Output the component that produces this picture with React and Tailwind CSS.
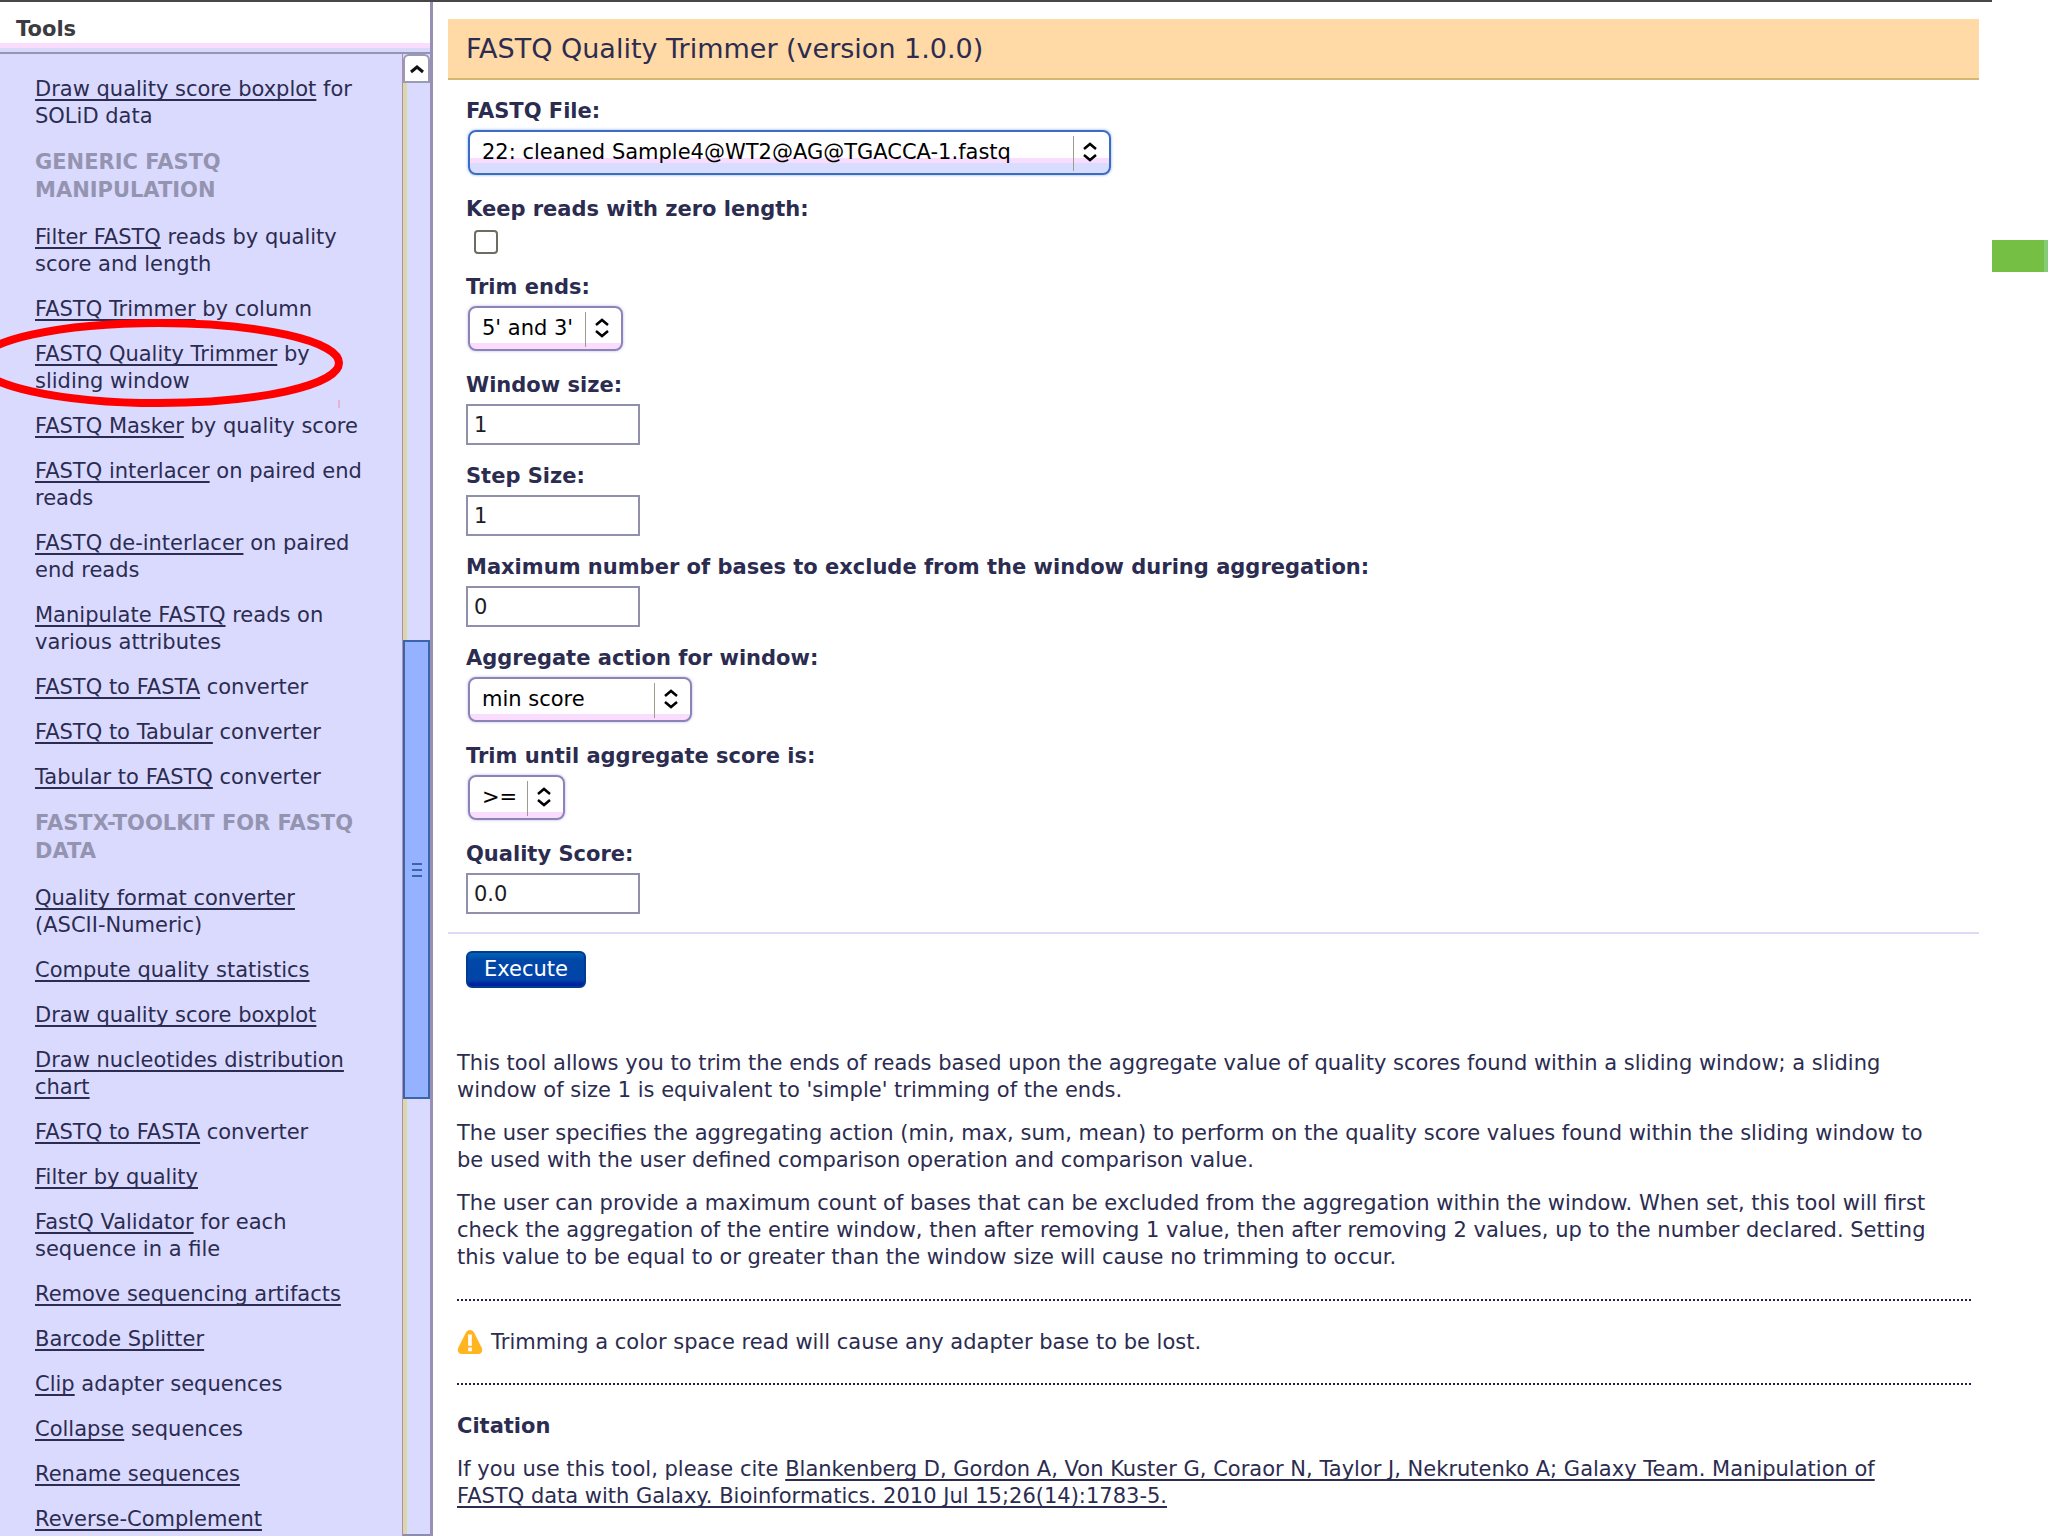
import { useState } from 'react'

const plotTools = [{ name: 'Draw quality score boxplot', rest: 'for SOLiD data' }]

const genericTools = [
  { name: 'Filter FASTQ', rest: 'reads by quality score and length' },
  { name: 'FASTQ Trimmer', rest: 'by column' },
  { name: 'FASTQ Quality Trimmer', rest: 'by sliding window', circled: true },
  { name: 'FASTQ Masker', rest: 'by quality score' },
  { name: 'FASTQ interlacer', rest: 'on paired end reads' },
  { name: 'FASTQ de-interlacer', rest: 'on paired end reads' },
  { name: 'Manipulate FASTQ', rest: 'reads on various attributes' },
  { name: 'FASTQ to FASTA', rest: 'converter' },
  { name: 'FASTQ to Tabular', rest: 'converter' },
  { name: 'Tabular to FASTQ', rest: 'converter' },
]

const fastxTools = [
  { name: 'Quality format converter', rest: '(ASCII-Numeric)' },
  { name: 'Compute quality statistics' },
  { name: 'Draw quality score boxplot' },
  { name: 'Draw nucleotides distribution chart' },
  { name: 'FASTQ to FASTA', rest: 'converter' },
  { name: 'Filter by quality' },
  { name: 'FastQ Validator', rest: 'for each sequence in a file' },
  { name: 'Remove sequencing artifacts' },
  { name: 'Barcode Splitter' },
  { name: 'Clip', rest: 'adapter sequences' },
  { name: 'Collapse', rest: 'sequences' },
  { name: 'Rename sequences' },
  { name: 'Reverse-Complement' },
]

function RedCircle() {
  return (
    <svg
      className="absolute -left-[59px] -top-[22px] w-[410px] h-[92px] pointer-events-none"
      viewBox="0 0 410 92"
      fill="none"
      aria-hidden="true"
    >
      <ellipse cx="183" cy="44" rx="180" ry="40" stroke="#ff0000" strokeWidth="8" />
      <path d="M363 81v8" stroke="#f08cb4" strokeWidth="1" />
    </svg>
  )
}

function ToolList({ tools }) {
  return (
    <ul className="flex flex-col gap-[18px]">
      {tools.map((tool, i) => (
        <li key={i} className="relative">
          <a href="#" className="underline decoration-2 underline-offset-[3px] [text-decoration-skip-ink:none]">
            {tool.name}
          </a>
          {tool.rest && ` ${tool.rest}`}
          {tool.circled && <RedCircle />}
        </li>
      ))}
    </ul>
  )
}

function SectionTitle({ children }) {
  return (
    <h2 className="mt-[18px] mb-5 font-bold leading-7 text-[#9494b0] uppercase">{children}</h2>
  )
}

function ScrollBar() {
  return (
    <div className="w-7 shrink-0 flex flex-col border-l border-[#b48ca8]" aria-hidden="true">
      <div className="h-[29px] shrink-0 flex items-center justify-center bg-white border-2 border-[#9a9ab4] rounded-t-md">
        <svg className="w-4 h-3" viewBox="0 0 16 12" fill="none">
          <path d="M2 9l6-5 6 5" stroke="#111" strokeWidth="3" />
        </svg>
      </div>
      <div className="grow-[560] basis-0 border-l-4 border-[#d8d8a8]" />
      <div className="grow-[458] basis-0 flex flex-col items-center justify-center gap-1 bg-[#94b2ff] border-2 border-[#3c64a8]">
        <span className="w-[10px] h-[2px] bg-[#3c64a8]" />
        <span className="w-[10px] h-[2px] bg-[#3c64a8]" />
        <span className="w-[10px] h-[2px] bg-[#3c64a8]" />
      </div>
      <div className="grow-[437] basis-0 border-l-4 border-[#d8d8a8]" />
      <div className="h-[2px] shrink-0 bg-[#8c8cb0]" />
    </div>
  )
}

function Sidebar() {
  return (
    <aside className="w-[433px] shrink-0 flex flex-col overflow-hidden bg-[#dadaff] border-r-3 border-[#9890b4]">
      <div className="h-[52px] shrink-0 pl-4 pt-[14px] border-b-2 border-[#9494b4] bg-[linear-gradient(to_bottom,#fff_41px,#fadcff_41px,#fadcff_46px,#d8d8fa_46px)]">
        <h1 className="font-bold leading-[27px] text-[#3c3c40]">Tools</h1>
      </div>
      <div className="grow flex">
        <nav className="grow pl-[35px] pr-9 pt-[22px] leading-[27px]">
          <ToolList tools={plotTools} />
          <SectionTitle>Generic FASTQ Manipulation</SectionTitle>
          <ToolList tools={genericTools} />
          <SectionTitle>FASTX-Toolkit for FASTQ data</SectionTitle>
          <ToolList tools={fastxTools} />
        </nav>
        <ScrollBar />
      </div>
    </aside>
  )
}

function TextField({ id, label, initial }) {
  const [value, setValue] = useState(initial)

  return (
    <div className="flex flex-col items-start gap-[5px] mb-[18px]">
      <label htmlFor={id} className="font-bold">{label}</label>
      <input
        id={id}
        type="text"
        value={value}
        onChange={(e) => setValue(e.target.value)}
        className="w-[174px] h-[41px] px-[6px] bg-white border-2 border-[#9090ac] text-[#1c1c24]"
      />
    </div>
  )
}

function SelectField({ id, label, options, width, active }) {
  return (
    <div className="flex flex-col items-start gap-[5px] mb-[21px]">
      <label htmlFor={id} className="font-bold">{label}</label>
      <div className={`relative ml-[2px] h-[45px] ${width}`}>
        <select
          id={id}
          className={`appearance-none w-full h-full pl-3 pr-10 rounded-lg border-2 text-black ${
            active
              ? 'border-[#3c6cc0] shadow-[0_0_3px_#80a8f0] bg-[linear-gradient(to_bottom,#fff_26px,#fadcff_26px,#fadcff_31px,#d8dcff_31px)]'
              : 'border-[#8c84b4] shadow-[0_0_3px_#b4b4f0] bg-[linear-gradient(to_bottom,#fff_35px,#fadcff_35px)]'
          }`}
        >
          {options.map((option) => (
            <option key={option}>{option}</option>
          ))}
        </select>
        <span className="absolute right-[37px] top-[6px] bottom-1 w-px bg-[#9c9c90] pointer-events-none" />
        <svg
          className="absolute right-[14px] top-[12px] w-[14px] h-5 pointer-events-none"
          viewBox="0 0 14 20"
          fill="none"
          aria-hidden="true"
        >
          <path d="M1 7l6-5 6 5M1 13l6 5 6-5" stroke="#000" strokeWidth="2.500" />
        </svg>
      </div>
    </div>
  )
}

function WarningIcon() {
  return (
    <svg className="w-[26px] h-7 shrink-0" viewBox="0 0 28 28" aria-hidden="true">
      <path
        d="M14 1c2 0 3.500 1 4.500 3l8 16c1.500 3.500 0 7-3.500 7H5c-3.500 0-5-3.500-3.500-7l8-16C10.500 2 12 1 14 1z"
        fill="#ffb420"
      />
      <path d="M12 6h4v12h-4zM12 20h4v4h-4z" fill="#fff" />
    </svg>
  )
}

function ToolForm() {
  return (
    <form onSubmit={(e) => e.preventDefault()}>
      <h2 className="h-[61px] pl-[18px] flex items-center text-[27px] bg-[#ffd9a6] border-b-2 border-[#d4b870]">
        FASTQ Quality Trimmer (version 1.0.0)
      </h2>

      <div className="pl-[18px] pt-[18px] border-b-2 border-[#dcdcf8]">
        <SelectField
          id="fastq-file"
          label="FASTQ File:"
          options={['22: cleaned Sample4@WT2@AG@TGACCA-1.fastq']}
          width="w-[643px]"
          active
        />
        <div className="flex flex-col items-start gap-[7px] mb-5">
          <label htmlFor="keep-zero" className="font-bold">Keep reads with zero length:</label>
          <input
            id="keep-zero"
            type="checkbox"
            className="appearance-none ml-2 size-6 rounded-sm bg-white border-2 border-[#6c6c60] checked:bg-[#3c6cc0]"
          />
        </div>
        <SelectField id="trim-ends" label="Trim ends:" options={["5' and 3'", "5' only", "3' only"]} width="w-[155px]" />
        <TextField id="window-size" label="Window size:" initial="1" />
        <TextField id="step-size" label="Step Size:" initial="1" />
        <TextField
          id="max-bases"
          label="Maximum number of bases to exclude from the window during aggregation:"
          initial="0"
        />
        <SelectField
          id="aggregate"
          label="Aggregate action for window:"
          options={['min score', 'max score', 'sum of scores', 'mean of scores']}
          width="w-[224px]"
        />
        <SelectField id="comparison" label="Trim until aggregate score is:" options={['>=', '>', '==', '<', '<=']} width="w-[97px]" />
        <TextField id="quality-score" label="Quality Score:" initial="0.0" />
      </div>

      <button
        type="submit"
        className="ml-[18px] mt-[17px] w-[120px] h-[37px] rounded-md border-2 border-[#003c90] text-white bg-[linear-gradient(to_bottom,#0064b4_0,#0048a8_7px,#0044a8_27px,#0020a0_31px)]"
      >
        Execute
      </button>
    </form>
  )
}

function ToolHelp() {
  return (
    <section className="mt-[62px] pl-[9px] pr-2">
      <div className="flex flex-col gap-4 pr-4">
        <p>
          This tool allows you to trim the ends of reads based upon the aggregate value of quality scores
          found within a sliding window; a sliding window of size 1 is equivalent to 'simple' trimming of the
          ends.
        </p>
        <p>
          The user specifies the aggregating action (min, max, sum, mean) to perform on the quality score
          values found within the sliding window to be used with the user defined comparison operation and
          comparison value.
        </p>
        <p>
          The user can provide a maximum count of bases that can be excluded from the aggregation within the
          window. When set, this tool will first check the aggregation of the entire window, then after
          removing 1 value, then after removing 2 values, up to the number declared. Setting this value to be
          equal to or greater than the window size will cause no trimming to occur.
        </p>
      </div>

      <hr className="mt-7 border-t-2 border-dotted border-[#20204c]" />
      <p className="my-[27px] flex items-center gap-2">
        <WarningIcon />
        Trimming a color space read will cause any adapter base to be lost.
      </p>
      <hr className="border-t-2 border-dotted border-[#20204c]" />

      <h3 className="mt-7 mb-4 font-bold">Citation</h3>
      <p className="pr-8">
        If you use this tool, please cite{' '}
        <a href="#" className="underline decoration-2 underline-offset-[3px] [text-decoration-skip-ink:none]">
          Blankenberg D, Gordon A, Von Kuster G, Coraor N, Taylor J, Nekrutenko A; Galaxy Team. Manipulation
          of FASTQ data with Galaxy. Bioinformatics. 2010 Jul 15;26(14):1783-5.
        </a>
      </p>
    </section>
  )
}

export default function App() {
  return (
    <div className="min-h-screen flex bg-white font-['DejaVu_Sans',sans-serif] text-[21px] leading-[27px] text-[#2c2c50]">
      <div className="grow min-w-0 flex flex-col border-t-2 border-[#4a4648]">
        <div className="grow flex">
          <Sidebar />
          <main className="grow min-w-0 pl-[15px] pr-[13px] pt-[17px]">
            <ToolForm />
            <ToolHelp />
          </main>
        </div>
      </div>
      <div className="w-14 shrink-0 pt-60">
        <div className="h-8 bg-[#74bf44] border-r-4 border-[#84cc78]" />
      </div>
    </div>
  )
}
